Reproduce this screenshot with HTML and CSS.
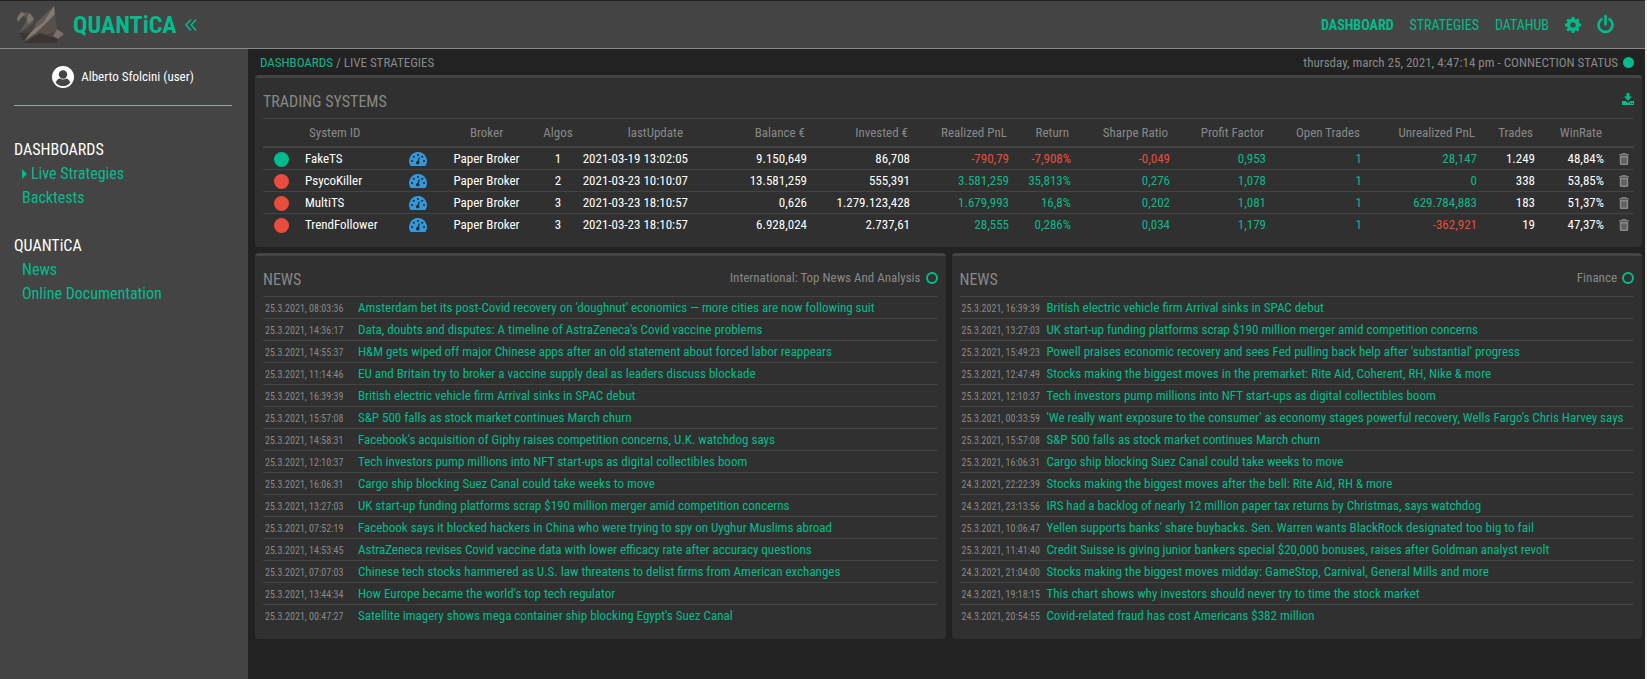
FILE: index.html
```html
<!DOCTYPE html>
<html lang="en">
<head>
<meta charset="utf-8">
<title>QUANTiCA - Live Strategies</title>
<link rel="stylesheet" href="styles.css">
</head>
<body>
<svg class="defs" aria-hidden="true">
  <symbol id="gauge" viewBox="0 0 36 28">
    <path fill="#3498db" d="M18 0A18 18 0 0 0 2.800 27.400Q3.200 28 4 28H32Q32.800 28 33.200 27.400A18 18 0 0 0 18 0Z"/>
    <g fill="#262d33"><circle cx="6" cy="18" r="2.200"/><circle cx="9.500" cy="9.500" r="2.200"/><circle cx="18" cy="6" r="2.200"/><circle cx="26.500" cy="9.500" r="2.200"/><circle cx="30" cy="18" r="2.200"/><circle cx="17.500" cy="21.500" r="3.600"/><path d="M19.800 10.500 16.200 20.500 19 21.500 21.800 11Z"/></g>
  </symbol>
  <symbol id="trash" viewBox="0 0 10 12">
    <path fill="#888" fill-rule="evenodd" d="M3 0H7L7.600 1.200H10V2.600H0V1.200H2.400ZM.8 3H9.200V10.800Q9.200 12 8 12H2Q.8 12 .8 10.800ZM2.700 4.500V10.500H3.500V4.500ZM4.600 4.500V10.500H5.400V4.500ZM6.500 4.500V10.500H7.300V4.500ZM3.600 1.200H6.400L6.200 .7H3.800Z"/>
  </symbol>
</svg>

<div class="app">
<header class="topbar">
  <a class="brand" href="#">
    <svg class="logo" viewBox="0 0 48 38" role="img" aria-label="QUANTiCA logo">
      <path fill="#4a4340" d="M3 27 18 14 21 17 38 0 40 23 48 28 42 37H7Z"/>
      <path fill="#5f5954" d="M1 12 5 6 14 7 18 13 17 17 3 27 8 19 11 12 7 10 2 16Z"/>
      <path fill="#7b746c" d="M1 12 5 6 9 8 5 12 2 16ZM11 11 14 7 18 13 12 18Z"/>
      <path fill="#635b55" d="M38 0 20 17 18 24 26 20Z"/>
      <path fill="#827a72" d="M38 0 39 9 20 27 7 36 18 23 27 17Z"/>
      <path fill="#564f4a" d="M39 8 41 25 8 36 21 27Z"/>
      <path fill="#796f66" d="M41 23 48 28 42 33 37 30Z"/>
      <path fill="#3a3433" d="M3 27 13 27 8 36ZM7 37 24 27 42 33 41 37Z"/>
    </svg>
    <span>QUANTiCA</span>
  </a>
  <button class="icon-btn collapse" aria-label="Collapse menu">
    <svg viewBox="0 0 12 12" width="12" height="12"><path d="M6 .5 1 6 6 11.500M11.200 .5 6.200 6 11.200 11.500" fill="none" stroke="#00bc8c" stroke-width="1.500"/></svg>
  </button>
  <nav class="topnav">
    <a class="active" href="#">DASHBOARD</a>
    <a href="#">STRATEGIES</a>
    <a href="#">DATAHUB</a>
    <button class="icon-btn" aria-label="Settings">
      <svg viewBox="-8 -8 16 16" width="16" height="16"><g fill="#00bc8c"><path fill-rule="evenodd" d="M0-6.200A6.200 6.200 0 1 1 0 6.200A6.200 6.200 0 1 1 0-6.200ZM0-2.700A2.700 2.700 0 1 0 0 2.700A2.700 2.700 0 1 0 0-2.700Z"/><g id="tooth"><path d="M-1.700-5.500-1.300-8H1.300L1.700-5.500ZM-1.700 5.500-1.300 8H1.300L1.700 5.500Z"/></g><use href="#tooth" transform="rotate(45)"/><use href="#tooth" transform="rotate(90)"/><use href="#tooth" transform="rotate(135)"/></g></svg>
    </button>
    <button class="icon-btn" aria-label="Log out">
      <svg viewBox="0 0 16 18" width="17" height="19"><path d="M4.200 4A6.600 6.600 0 1 0 11.800 4M8 1V9" fill="none" stroke="#00bc8c" stroke-width="2.500" stroke-linecap="round"/></svg>
    </button>
  </nav>
</header>

<div class="layout">
<aside class="sidebar">
  <div class="user">
    <svg viewBox="0 0 22 22" width="22" height="22"><circle cx="11" cy="11" r="11" fill="#fff"/><circle cx="11" cy="8.500" r="4.200" fill="#444"/><path d="M3.700 16.500Q5.500 12.700 8 12.600Q11 14.400 14 12.600Q16.500 12.700 18.300 16.500A9.200 9.200 0 0 1 3.700 16.500Z" fill="#444"/></svg>
    <span>Alberto Sfolcini (user)</span>
  </div>
  <nav class="sidenav">
    <h2>DASHBOARDS</h2>
    <a class="current" href="#"><svg viewBox="0 0 5 10" width="5" height="10"><path d="M0 0 5 5 0 10Z" fill="#00bc8c"/></svg>Live Strategies</a>
    <a href="#">Backtests</a>
    <h2>QUANTiCA</h2>
    <a href="#">News</a>
    <a href="#">Online Documentation</a>
  </nav>
</aside>

<main class="content">
  <div class="crumbs">
    <div><a href="#">DASHBOARDS</a> / LIVE STRATEGIES</div>
    <div class="status">thursday, march 25, 2021, 4:47:14 pm - CONNECTION STATUS <i class="led"></i></div>
  </div>

  <section class="panel">
    <div class="panel-head">
      <h1>TRADING SYSTEMS</h1>
      <button class="icon-btn download" aria-label="Download">
        <svg viewBox="0 0 12 12" width="12" height="12"><path fill="#00bc8c" fill-rule="evenodd" d="M4.500 0H7.500V3.500H10L6 7.800 2 3.500H4.500ZM0 8H3.500L6 10 8.500 8H12V12H0ZM8 10V11H9V10ZM10 10V11H11V10Z"/></svg>
      </button>
    </div>
    <table class="systems">
      <colgroup><col class="w37"><col class="w100"><col class="w35"><col class="w103"><col class="w40"><col class="w114"><col class="w119"><col class="w103"><col class="w99"><col class="w62"><col class="w99"><col class="w96"><col class="w96"><col class="w115"><col class="w58"><col class="w69"><col class="w26"></colgroup>
      <thead><tr><th></th><th class="name">System ID</th><th></th><th class="mid">Broker</th><th class="mid">Algos</th><th class="update">lastUpdate</th><th>Balance €</th><th>Invested €</th><th>Realized PnL</th><th>Return</th><th>Sharpe Ratio</th><th>Profit Factor</th><th>Open Trades</th><th>Unrealized PnL</th><th>Trades</th><th>WinRate</th><th></th></tr></thead>
      <tbody>
        <tr><td class="mid"><i class="dot on"></i></td><td class="name">FakeTS</td><td class="mid"><svg class="gauge"><use href="#gauge"/></svg></td><td class="mid">Paper Broker</td><td class="mid">1</td><td>2021-03-19 13:02:05</td><td>9.150,649</td><td>86,708</td><td class="neg">-790,79</td><td class="neg">-7,908%</td><td class="neg">-0,049</td><td class="pos">0,953</td><td class="pos">1</td><td class="pos">28,147</td><td>1.249</td><td>48,84%</td><td><button class="icon-btn" aria-label="Delete FakeTS"><svg class="trash"><use href="#trash"/></svg></button></td></tr>
        <tr><td class="mid"><i class="dot"></i></td><td class="name">PsycoKiller</td><td class="mid"><svg class="gauge"><use href="#gauge"/></svg></td><td class="mid">Paper Broker</td><td class="mid">2</td><td>2021-03-23 10:10:07</td><td>13.581,259</td><td>555,391</td><td class="pos">3.581,259</td><td class="pos">35,813%</td><td class="pos">0,276</td><td class="pos">1,078</td><td class="pos">1</td><td class="pos">0</td><td>338</td><td>53,85%</td><td><button class="icon-btn" aria-label="Delete PsycoKiller"><svg class="trash"><use href="#trash"/></svg></button></td></tr>
        <tr><td class="mid"><i class="dot"></i></td><td class="name">MultiTS</td><td class="mid"><svg class="gauge"><use href="#gauge"/></svg></td><td class="mid">Paper Broker</td><td class="mid">3</td><td>2021-03-23 18:10:57</td><td>0,626</td><td>1.279.123,428</td><td class="pos">1.679,993</td><td class="pos">16,8%</td><td class="pos">0,202</td><td class="pos">1,081</td><td class="pos">1</td><td class="pos">629.784,883</td><td>183</td><td>51,37%</td><td><button class="icon-btn" aria-label="Delete MultiTS"><svg class="trash"><use href="#trash"/></svg></button></td></tr>
        <tr><td class="mid"><i class="dot"></i></td><td class="name">TrendFollower</td><td class="mid"><svg class="gauge"><use href="#gauge"/></svg></td><td class="mid">Paper Broker</td><td class="mid">3</td><td>2021-03-23 18:10:57</td><td>6.928,024</td><td>2.737,61</td><td class="pos">28,555</td><td class="pos">0,286%</td><td class="pos">0,034</td><td class="pos">1,179</td><td class="pos">1</td><td class="neg">-362,921</td><td>19</td><td>47,37%</td><td><button class="icon-btn" aria-label="Delete TrendFollower"><svg class="trash"><use href="#trash"/></svg></button></td></tr>
      </tbody>
    </table>
  </section>

  <div class="feeds">
    <section class="panel">
      <div class="panel-head"><h1>NEWS</h1><div class="source">International: Top News And Analysis <i class="ring"></i></div></div>
      <ul class="news wide">
        <li><time>25.3.2021, 08:03:36</time><a href="#">Amsterdam bet its post-Covid recovery on 'doughnut' economics — more cities are now following suit</a></li>
        <li><time>25.3.2021, 14:36:17</time><a href="#">Data, doubts and disputes: A timeline of AstraZeneca's Covid vaccine problems</a></li>
        <li><time>25.3.2021, 14:55:37</time><a href="#">H&amp;M gets wiped off major Chinese apps after an old statement about forced labor reappears</a></li>
        <li><time>25.3.2021, 11:14:46</time><a href="#">EU and Britain try to broker a vaccine supply deal as leaders discuss blockade</a></li>
        <li><time>25.3.2021, 16:39:39</time><a href="#">British electric vehicle firm Arrival sinks in SPAC debut</a></li>
        <li><time>25.3.2021, 15:57:08</time><a href="#">S&amp;P 500 falls as stock market continues March churn</a></li>
        <li><time>25.3.2021, 14:58:31</time><a href="#">Facebook's acquisition of Giphy raises competition concerns, U.K. watchdog says</a></li>
        <li><time>25.3.2021, 12:10:37</time><a href="#">Tech investors pump millions into NFT start-ups as digital collectibles boom</a></li>
        <li><time>25.3.2021, 16:06:31</time><a href="#">Cargo ship blocking Suez Canal could take weeks to move</a></li>
        <li><time>25.3.2021, 13:27:03</time><a href="#">UK start-up funding platforms scrap $190 million merger amid competition concerns</a></li>
        <li><time>25.3.2021, 07:52:19</time><a href="#">Facebook says it blocked hackers in China who were trying to spy on Uyghur Muslims abroad</a></li>
        <li><time>25.3.2021, 14:53:45</time><a href="#">AstraZeneca revises Covid vaccine data with lower efficacy rate after accuracy questions</a></li>
        <li><time>25.3.2021, 07:07:03</time><a href="#">Chinese tech stocks hammered as U.S. law threatens to delist firms from American exchanges</a></li>
        <li><time>25.3.2021, 13:44:34</time><a href="#">How Europe became the world's top tech regulator</a></li>
        <li><time>25.3.2021, 00:47:27</time><a href="#">Satellite imagery shows mega container ship blocking Egypt's Suez Canal</a></li>
      </ul>
    </section>
    <section class="panel">
      <div class="panel-head"><h1>NEWS</h1><div class="source">Finance <i class="ring"></i></div></div>
      <ul class="news">
        <li><time>25.3.2021, 16:39:39</time><a href="#">British electric vehicle firm Arrival sinks in SPAC debut</a></li>
        <li><time>25.3.2021, 13:27:03</time><a href="#">UK start-up funding platforms scrap $190 million merger amid competition concerns</a></li>
        <li><time>25.3.2021, 15:49:23</time><a href="#">Powell praises economic recovery and sees Fed pulling back help after 'substantial' progress</a></li>
        <li><time>25.3.2021, 12:47:49</time><a href="#">Stocks making the biggest moves in the premarket: Rite Aid, Coherent, RH, Nike &amp; more</a></li>
        <li><time>25.3.2021, 12:10:37</time><a href="#">Tech investors pump millions into NFT start-ups as digital collectibles boom</a></li>
        <li><time>25.3.2021, 00:33:59</time><a href="#">'We really want exposure to the consumer' as economy stages powerful recovery, Wells Fargo's Chris Harvey says</a></li>
        <li><time>25.3.2021, 15:57:08</time><a href="#">S&amp;P 500 falls as stock market continues March churn</a></li>
        <li><time>25.3.2021, 16:06:31</time><a href="#">Cargo ship blocking Suez Canal could take weeks to move</a></li>
        <li><time>24.3.2021, 22:22:39</time><a href="#">Stocks making the biggest moves after the bell: Rite Aid, RH &amp; more</a></li>
        <li><time>24.3.2021, 23:13:56</time><a href="#">IRS had a backlog of nearly 12 million paper tax returns by Christmas, says watchdog</a></li>
        <li><time>25.3.2021, 10:06:47</time><a href="#">Yellen supports banks' share buybacks. Sen. Warren wants BlackRock designated too big to fail</a></li>
        <li><time>25.3.2021, 11:41:40</time><a href="#">Credit Suisse is giving junior bankers special $20,000 bonuses, raises after Goldman analyst revolt</a></li>
        <li><time>24.3.2021, 21:04:00</time><a href="#">Stocks making the biggest moves midday: GameStop, Carnival, General Mills and more</a></li>
        <li><time>24.3.2021, 19:18:15</time><a href="#">This chart shows why investors should never try to time the stock market</a></li>
        <li><time>24.3.2021, 20:54:55</time><a href="#">Covid-related fraud has cost Americans $382 million</a></li>
      </ul>
    </section>
  </div>
</main>
</div>
</div>
</body>
</html>
```
FILE: styles.css
```css
* { box-sizing: border-box; }

body {
  margin: 0;
  background: #f0f0f0;
  color: #888;
  font: 13px/20px "Roboto Condensed", Roboto, sans-serif;
}

.defs { position: absolute; width: 0; height: 0; }

a { color: #00bc8c; text-decoration: none; }
h1, h2, ul { margin: 0; padding: 0; }
i { display: inline-block; }
svg { display: block; }

.icon-btn {
  display: flex;
  padding: 0;
  border: 0;
  background: none;
  cursor: pointer;
}

.app {
  display: flex;
  flex-direction: column;
  min-height: 100vh;
  margin-right: 2px;
  background: #222;
}

.topbar {
  display: flex;
  align-items: center;
  height: 49px;
  padding: 0 31px 0 16px;
  border-top: 1px solid #222;
  border-bottom: 1px solid #888;
  background: #444;
}

.brand {
  display: flex;
  align-items: center;
  gap: 9px;
  font-size: 24px;
  font-weight: 700;
}
.logo { width: 48px; height: 38px; }
.collapse { margin-left: 8px; }

.topnav {
  display: flex;
  align-items: center;
  gap: 16px;
  margin-left: auto;
  font-size: 14px;
}
.topnav .active { font-weight: 700; }

.layout { display: flex; flex: 1; }

.sidebar {
  flex: none;
  width: 248px;
  padding: 0 16px 0 14px;
  background: #444;
}
.user {
  display: flex;
  align-items: center;
  justify-content: center;
  gap: 7px;
  height: 57px;
  border-bottom: 1px solid #95a5a6;
  color: #fff;
}
.sidenav { font-size: 16px; line-height: 24px; padding-top: 32px; }
.sidenav h2 { color: #fff; font-size: 16px; font-weight: 400; }
.sidenav a { display: flex; align-items: center; gap: 4px; padding-left: 8px; }
.sidenav a + h2 { margin-top: 24px; }

.content { flex: 1; min-width: 0; padding: 0 3px 16px 7px; }

.crumbs {
  display: flex;
  justify-content: space-between;
  align-items: center;
  height: 26px;
  padding: 1px 8px 0 5px;
}
.status, .source { display: flex; align-items: center; gap: 5px; }
.led { width: 11px; height: 11px; border-radius: 50%; background: #00bc8c; }
.ring { width: 12px; height: 12px; border: 2px solid #00bc8c; border-radius: 50%; }

.panel {
  min-width: 0;
  padding: 0 8px 12px;
  border-top: 3px solid #444;
  border-radius: 4px;
  background: #303030;
}
.panel-head {
  display: flex;
  justify-content: space-between;
  align-items: center;
  height: 41px;
  padding-top: 8px;
  border-bottom: 1px solid #444;
}
.panel-head h1 { font-size: 16px; font-weight: 400; }
.panel-head .source { padding-bottom: 4px; }
.panel-head .download { padding-bottom: 6px; }

.systems {
  width: 100%;
  table-layout: fixed;
  border-collapse: collapse;
  color: #fff;
}
.systems th, .systems td {
  height: 22px;
  padding: 1px 4px 0 0;
  line-height: 19px;
  text-align: right;
  white-space: nowrap;
}
.systems td { border-top: 1px solid #444; }
.systems th {
  height: 28px;
  padding: 0 6px 0 0;
  border-bottom: 2px solid #444;
  color: #888;
  font-weight: 400;
}
.systems .name { padding-left: 5px; text-align: left; }
.systems th.name { padding-left: 9px; }
.systems .mid { padding-right: 0; text-align: center; }
.systems th.update { padding-right: 9px; }
.systems .pos { color: #00bc8c; }
.systems .neg { color: #e74c3c; }
.systems td:last-child { padding-right: 5px; }
.w26 { width: 26px; }
.w35 { width: 35px; }
.w37 { width: 37px; }
.w40 { width: 40px; }
.w58 { width: 58px; }
.w62 { width: 62px; }
.w69 { width: 69px; }
.w96 { width: 96px; }
.w99 { width: 99px; }
.w100 { width: 100px; }
.w103 { width: 103px; }
.w114 { width: 114px; }
.w115 { width: 115px; }
.w119 { width: 119px; }

.dot {
  width: 15px;
  height: 15px;
  border-radius: 50%;
  background: #e74c3c;
  vertical-align: middle;
}
.dot.on { background: #00bc8c; }
.gauge { width: 18px; height: 14px; margin: 0 auto; }
.trash { width: 10px; height: 12px; }
.systems td .icon-btn { margin-left: auto; }

.feeds {
  display: grid;
  grid-template-columns: 1fr 1fr;
  gap: 6px;
  margin-top: 6px;
}
.news { list-style: none; line-height: 21px; }
.news li {
  display: grid;
  grid-template-columns: 87px 1fr;
  height: 22px;
  border-bottom: 1px solid #444;
  white-space: nowrap;
}
.news.wide li { grid-template-columns: 95px 1fr; }
.news li:last-child { border-bottom: 0; }
.news time { padding: 1px 0 0 2px; font-size: 10px; }
```
